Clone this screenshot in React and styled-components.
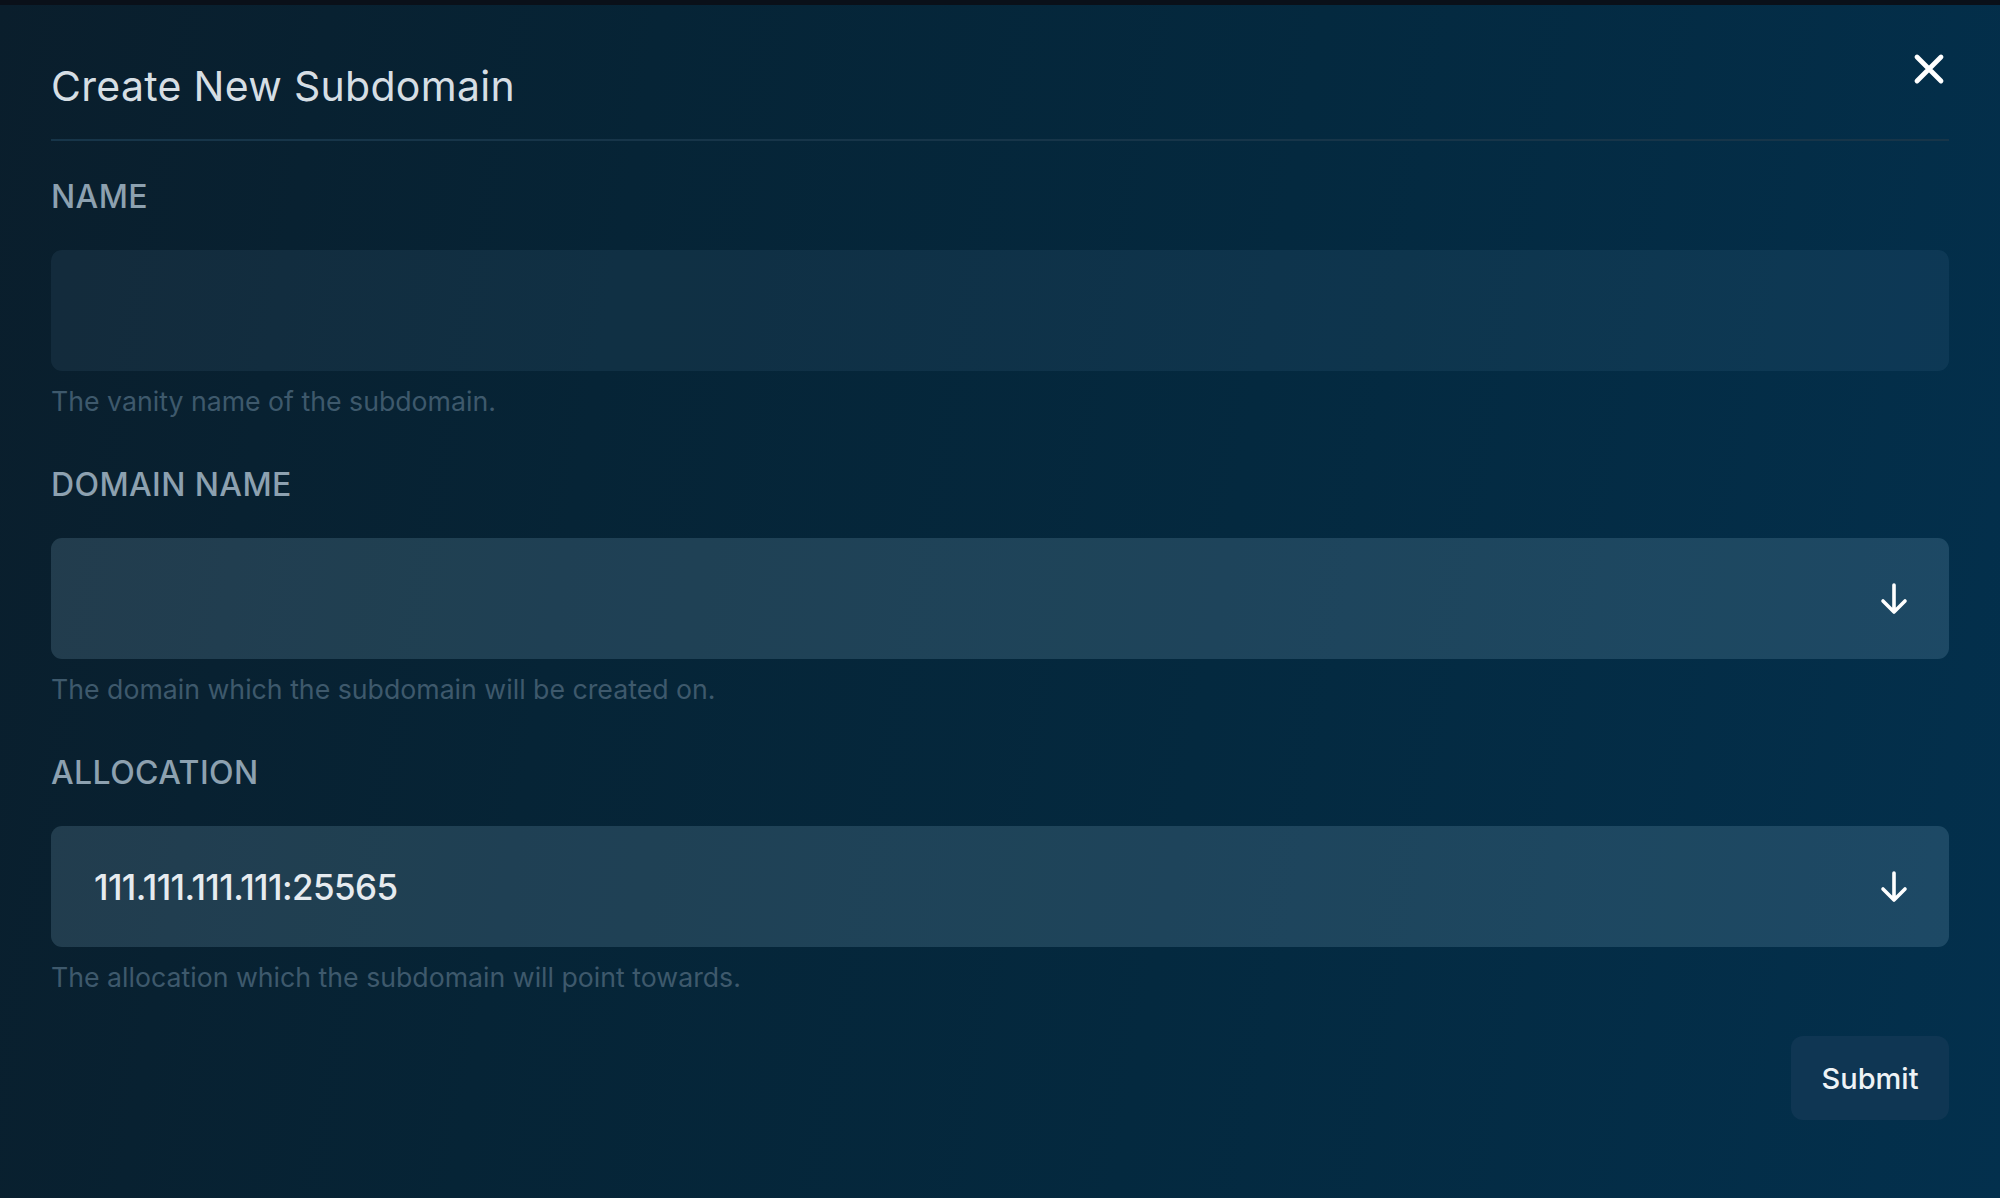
import React from 'react';
import styled, { createGlobalStyle } from 'styled-components';

const GlobalStyle = createGlobalStyle`
    html, body {
        margin: 0;
        padding: 0;
        height: 100%;
        background: #062232;
    }
    * {
        box-sizing: border-box;
    }
`;

const ModalDiv = styled.div`
    position: relative;
    width: 2000px;
    height: 1198px;
    overflow: hidden;
    border-top: 5px solid #0a1019;
    background: linear-gradient(100deg, #0a1e2c 0%, #062436 30%, #04293f 60%, #03304d 100%);
    padding: 0px 51px;
    font-family: Inter, "Liberation Sans", sans-serif;
    display: flex;
    flex-direction: column;
`;

const HeaderDiv = styled.div`
    height: 136px;
    display: flex;
    align-items: flex-end;
    padding-bottom: 29px;
    border-bottom: 2px solid #173549;
`;

const TitleH2 = styled.h2`
    margin: 0px;
    font-size: 41px;
    line-height: 48px;
    font-weight: 400;
    color: #d6dee4;
    letter-spacing: 0.3px;
`;

const CloseButton = styled.button`
    position: absolute;
    top: 48px;
    right: 55px;
    width: 32px;
    height: 32px;
    padding: 0px;
    border: none;
    background: transparent;
    display: flex;
    justify-content: center;
    align-items: center;
    cursor: pointer;
`;

const FormDiv = styled.form`
    display: flex;
    flex-direction: column;
    padding-top: 36px;
`;

const FieldDiv = styled.div`
    display: flex;
    flex-direction: column;
    padding-bottom: 41px;

    & + & {
        margin-top: 5px;
    }
`;

const FieldLabel = styled.label`
    font-size: 32px;
    line-height: 40px;
    font-weight: 500;
    color: #8da1b0;
    letter-spacing: 0.4px;
    text-transform: uppercase;
    margin-bottom: 33px;
`;

const FieldBox = styled.div`
    height: 121px;
    border-radius: 11px;
    background: ${props => props.select ? 'rgba(135, 178, 205, 0.2)' : 'rgba(100, 150, 185, 0.11)'};
    display: flex;
    align-items: center;
    justify-content: space-between;
    padding: 0px 40px 0px 43px;
`;

const FieldValue = styled.span`
    font-size: 35px;
    font-weight: 500;
    color: #e6ebef;
    letter-spacing: -0.6px;
`;

const HelperText = styled.p`
    margin: 12px 0px 0px 0px;
    font-size: 26.7px;
    line-height: 36px;
    color: #3e596c;
`;

const ButtonRow = styled.div`
    display: flex;
    justify-content: flex-end;
`;

const SubmitButton = styled.button`
    width: 158px;
    height: 84px;
    border: none;
    border-radius: 12px;
    background: #0f3653;
    color: #eef3f6;
    font-family: Inter, "Liberation Sans", sans-serif;
    font-size: 29px;
    font-weight: 500;
    cursor: pointer;
`;

const CloseIcon = () => (
    <svg width="32" height="32" viewBox="0 0 32 32">
        <path d="M4 4 L28 28 M28 4 L4 28" stroke="#ffffff" strokeWidth="4.8" strokeLinecap="round" fill="none" />
    </svg>
);

const ArrowIcon = () => (
    <svg width="30" height="32" viewBox="0 0 30 32">
        <path d="M15 2 V29 M4 18 L15 29 L26 18" stroke="#ffffff" strokeWidth="3.6" strokeLinecap="round" strokeLinejoin="round" fill="none" />
    </svg>
);

const fields = [
    { name: 'Name', help: 'The vanity name of the subdomain.' },
    { name: 'Domain Name', help: 'The domain which the subdomain will be created on.', select: true },
    { name: 'Allocation', help: 'The allocation which the subdomain will point towards.', select: true, value: '111.111.111.111:25565' },
];

const App = () => (
    <>
        <GlobalStyle />
        <ModalDiv>
            <HeaderDiv>
                <TitleH2>Create New Subdomain</TitleH2>
            </HeaderDiv>
            <CloseButton type="button">
                <CloseIcon />
            </CloseButton>

            <FormDiv onSubmit={e => e.preventDefault()}>
                {fields.map(field => (
                    <FieldDiv key={field.name}>
                        <FieldLabel>{field.name}</FieldLabel>
                        <FieldBox select={field.select}>
                            <FieldValue>{field.value || ''}</FieldValue>
                            {field.select && <ArrowIcon />}
                        </FieldBox>
                        <HelperText>{field.help}</HelperText>
                    </FieldDiv>
                ))}
                <ButtonRow>
                    <SubmitButton type="submit">Submit</SubmitButton>
                </ButtonRow>
            </FormDiv>
        </ModalDiv>
    </>
);

export default App;
